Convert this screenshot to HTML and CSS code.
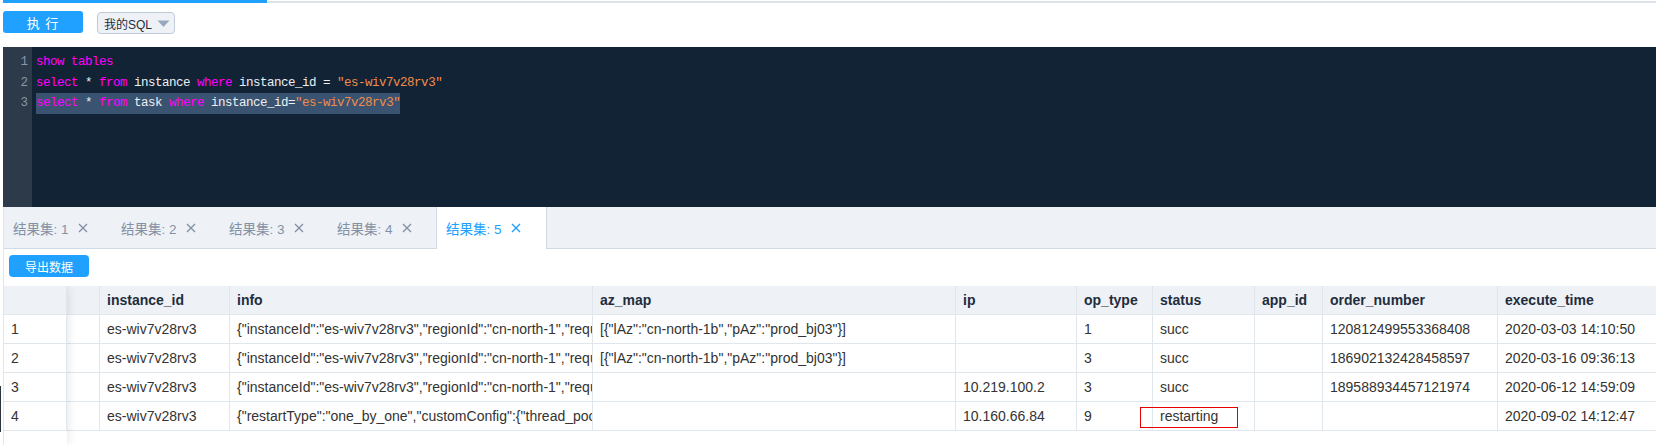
FILE: index.html
```html
<!DOCTYPE html>
<html lang="zh-CN">
<head>
<meta charset="utf-8">
<title>SQL</title>
<link rel="stylesheet" href="styles.css">
</head>
<body>
<div class="page">
  <div class="progress"><div class="progress-fill"></div></div>
  <div class="toolbar">
    <button class="btn-run">执 行</button>
    <div class="dropdown">
      <span>我的SQL</span>
      <svg class="caret" viewBox="0 0 13 7" width="13" height="7"><path d="M0.5 0.5 H12.5 L7.2 6.3 Q6.5 7 5.8 6.3 Z" fill="#97a8be"/></svg>
    </div>
  </div>
  <div class="editor">
    <div class="gutter"><div>1</div><div>2</div><div>3</div></div>
    <div class="code">
      <div class="line"><span class="kw">show</span> <span class="kw">tables</span></div>
      <div class="line"><span class="kw">select</span> * <span class="kw">from</span> instance <span class="kw">where</span> instance_id = <span class="str">"es-wiv7v28rv3"</span></div>
      <div class="line"><span class="sel"><span class="kw">select</span> * <span class="kw">from</span> task <span class="kw">where</span> instance_id=<span class="str">"es-wiv7v28rv3"</span></span></div>
    </div>
  </div>
  <div class="results">
    <div class="tabs">
      <div class="tab"><span>结果集: 1</span><svg viewBox="0 0 10 10"><path d="M1 1 L9 9 M9 1 L1 9"/></svg></div>
      <div class="tab"><span>结果集: 2</span><svg viewBox="0 0 10 10"><path d="M1 1 L9 9 M9 1 L1 9"/></svg></div>
      <div class="tab"><span>结果集: 3</span><svg viewBox="0 0 10 10"><path d="M1 1 L9 9 M9 1 L1 9"/></svg></div>
      <div class="tab"><span>结果集: 4</span><svg viewBox="0 0 10 10"><path d="M1 1 L9 9 M9 1 L1 9"/></svg></div>
      <div class="tab active"><span>结果集: 5</span><svg viewBox="0 0 10 10"><path d="M1 1 L9 9 M9 1 L1 9"/></svg></div>
    </div>
    <div class="actions"><button class="btn-export">导出数据</button></div>
    <div class="table-wrap">
      <table class="grid">
        <colgroup>
          <col class="c-idx"><col class="c-blank"><col class="c-iid"><col class="c-info"><col class="c-az"><col class="c-ip"><col class="c-op"><col class="c-status"><col class="c-app"><col class="c-order"><col class="c-time">
        </colgroup>
        <thead>
          <tr><th></th><th></th><th>instance_id</th><th>info</th><th>az_map</th><th>ip</th><th>op_type</th><th>status</th><th>app_id</th><th>order_number</th><th>execute_time</th></tr>
        </thead>
        <tbody>
          <tr><td>1</td><td></td><td>es-wiv7v28rv3</td><td class="clip">{"instanceId":"es-wiv7v28rv3","regionId":"cn-north-1","requestId":"bq7kc1s8"}</td><td>[{"lAz":"cn-north-1b","pAz":"prod_bj03"}]</td><td></td><td>1</td><td>succ</td><td></td><td>120812499553368408</td><td>2020-03-03 14:10:50</td></tr>
          <tr><td>2</td><td></td><td>es-wiv7v28rv3</td><td class="clip">{"instanceId":"es-wiv7v28rv3","regionId":"cn-north-1","requestId":"bqaq8r0c"}</td><td>[{"lAz":"cn-north-1b","pAz":"prod_bj03"}]</td><td></td><td>3</td><td>succ</td><td></td><td>186902132428458597</td><td>2020-03-16 09:36:13</td></tr>
          <tr><td>3</td><td></td><td>es-wiv7v28rv3</td><td class="clip">{"instanceId":"es-wiv7v28rv3","regionId":"cn-north-1","requestId":"brh3q5ks"}</td><td></td><td>10.219.100.2</td><td>3</td><td>succ</td><td></td><td>189588934457121974</td><td>2020-06-12 14:59:09</td></tr>
          <tr><td>4</td><td></td><td>es-wiv7v28rv3</td><td class="clip">{"restartType":"one_by_one","customConfig":{"thread_pool.search.size":"20"}}</td><td></td><td>10.160.66.84</td><td>9</td><td class="marked">restarting<span class="mark"></span></td><td></td><td></td><td>2020-09-02 14:12:47</td></tr>
        </tbody>
      </table>
      <div class="fixed-shadow"></div>
    </div>
  </div>
  <div class="scroll-mark"></div>
</div>
</body>
</html>
```

FILE: styles.css
```css
html, body {
  margin: 0;
  padding: 0;
  overflow: hidden;
  background: #fff;
}
body {
  font-family: "Liberation Sans", "Noto Sans CJK SC", sans-serif;
}
.page {
  position: relative;
  height: 445px;
  padding-left: 3px;
  box-sizing: border-box;
  display: flex;
  flex-direction: column;
}
.progress {
  flex: none;
  height: 3px;
  background: linear-gradient(#ffffff 0 1px, #dbe2ea 1px);
}
.progress-fill {
  width: 264px;
  height: 3px;
  background: #20a0ff;
}
.toolbar {
  flex: none;
  height: 44px;
  box-sizing: border-box;
  padding-top: 8px;
  display: flex;
  align-items: flex-start;
}
.btn-run {
  width: 80px;
  height: 22px;
  padding: 0;
  border: 0;
  border-radius: 3px;
  background: #20a0ff;
  color: #fff;
  font-family: inherit;
  font-size: 13px;
  letter-spacing: 1px;
}
.dropdown {
  margin-left: 14px;
  margin-top: 1px;
  width: 78px;
  height: 22px;
  box-sizing: border-box;
  border: 1px solid #bfcbd9;
  border-radius: 4px;
  background: #eef1f6;
  display: flex;
  align-items: center;
  gap: 5px;
  padding-left: 6px;
  font-size: 12px;
  color: #1f2d3d;
}
.caret {
  display: block;
}
.editor {
  flex: none;
  height: 160px;
  display: flex;
  background: #132336;
  font-family: "Liberation Mono", monospace;
  font-size: 12.5px;
  letter-spacing: -0.5px;
  line-height: 20.7px;
}
.gutter {
  width: 29px;
  box-sizing: border-box;
  padding: 5px 4px 0 0;
  background: #2c3a4a;
  color: #8a97a6;
  text-align: right;
  letter-spacing: 0;
}
.code {
  flex: 1;
  padding: 5px 0 0 4px;
  color: #eef0f3;
}
.line {
  height: 20.7px;
  white-space: pre;
}
.kw { color: #ff00ff; }
.str { color: #f08d49; }
.sel {
  display: inline-block;
  background: #3a5370;
}
.results {
  flex: 1;
  min-height: 0;
  display: flex;
  flex-direction: column;
  border-left: 1px solid #dfe6ec;
}
.tabs {
  flex: none;
  height: 42px;
  box-sizing: border-box;
  display: flex;
  background: #eef1f6;
  border-bottom: 1px solid #d1dbe5;
}
.tab {
  width: 108px;
  height: 41px;
  box-sizing: border-box;
  padding-left: 9px;
  display: flex;
  align-items: center;
  gap: 9px;
  font-size: 13.5px;
  color: #8391a5;
  white-space: nowrap;
}
.tab svg {
  width: 10px;
  height: 10px;
  stroke: currentColor;
  stroke-width: 1.4;
  fill: none;
}
.tab.active {
  width: 111px;
  height: 42px;
  background: #fff;
  color: #20a0ff;
  border-left: 1px solid #d1dbe5;
  border-right: 1px solid #d1dbe5;
}
.actions {
  flex: none;
  height: 37px;
  box-sizing: border-box;
  padding: 6px 0 0 5px;
}
.btn-export {
  width: 80px;
  height: 22px;
  padding: 0;
  border: 0;
  border-radius: 4px;
  background: #20a0ff;
  color: #fff;
  font-family: inherit;
  font-size: 12px;
}
.table-wrap {
  flex: 1;
  min-height: 0;
  position: relative;
  overflow: hidden;
}
.grid {
  border-collapse: separate;
  border-spacing: 0;
  table-layout: fixed;
  width: 1674px;
  font-size: 14px;
  color: #333;
}
.c-idx { width: 63px; }
.c-blank { width: 33px; }
.c-iid { width: 130px; }
.c-info { width: 363px; }
.c-az { width: 363px; }
.c-ip { width: 121px; }
.c-op { width: 76px; }
.c-status { width: 102px; }
.c-app { width: 68px; }
.c-order { width: 175px; }
.c-time { width: 180px; }
.grid th, .grid td {
  height: 28px;
  line-height: 28px;
  padding: 0 6px 0 7px;
  border-right: 1px solid #dfe6ec;
  border-bottom: 1px solid #dfe6ec;
  white-space: nowrap;
  overflow: hidden;
  text-overflow: clip;
  text-align: left;
}
.grid td.clip {
  padding-right: 0;
}
.grid th {
  background: #eef1f6;
  color: #1f2d3d;
  font-weight: bold;
}
.grid td.marked {
  position: relative;
  overflow: visible;
}
.mark {
  position: absolute;
  left: -13px;
  top: 5px;
  width: 98px;
  height: 21px;
  box-sizing: border-box;
  border: 1px solid #e60000;
}
.fixed-shadow {
  position: absolute;
  left: 0;
  top: 0;
  bottom: 0;
  width: 63px;
  box-shadow: 0 0 10px rgba(0, 0, 0, 0.12);
  pointer-events: none;
}
.scroll-mark {
  position: absolute;
  left: 0;
  top: 386px;
  width: 1px;
  height: 46px;
  background: #2c3440;
}
```
